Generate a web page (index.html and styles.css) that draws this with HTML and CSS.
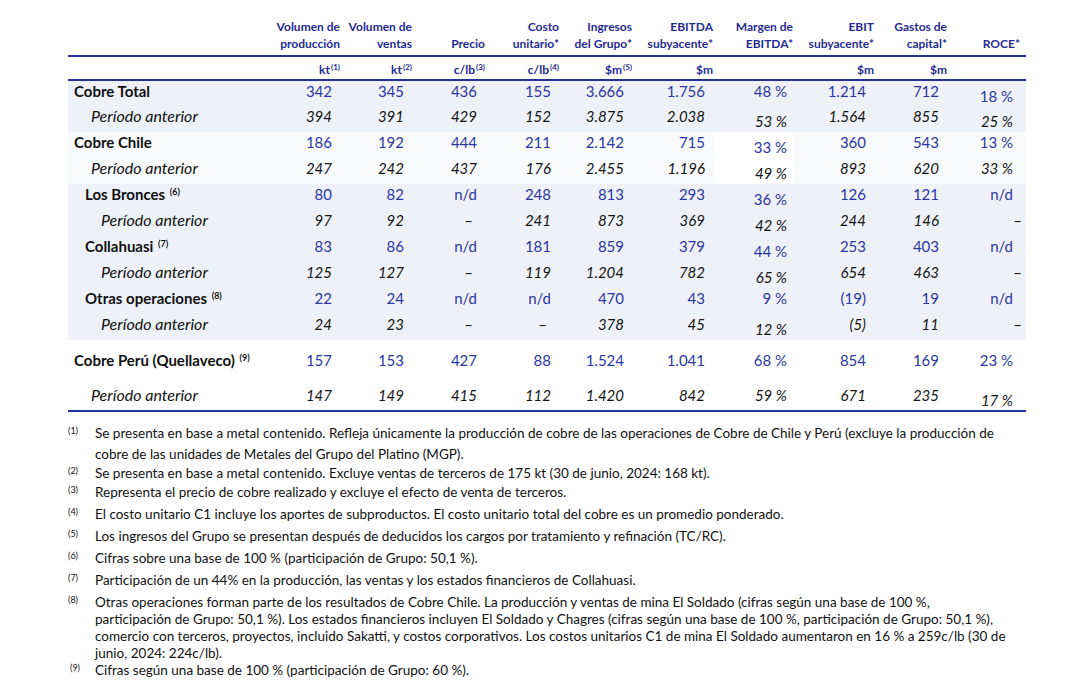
FILE: index.html
```html
<!DOCTYPE html>
<html lang="es">
<head>
<meta charset="utf-8">
<title>Cobre</title>
<link rel="stylesheet" href="styles.css">
</head>
<body>
<div class="page">
<table class="tbl">
  <colgroup>
    <col class="c-label"><col class="c2"><col class="c3"><col class="c4"><col class="c5"><col class="c6"><col class="c7"><col class="c8"><col class="c9"><col class="c10"><col class="c11">
  </colgroup>
  <thead>
    <tr class="hdr">
      <th></th>
      <th>Volumen de<br>producción</th>
      <th>Volumen de<br>ventas</th>
      <th>Precio</th>
      <th>Costo<br>unitario*</th>
      <th>Ingresos<br>del Grupo*</th>
      <th>EBITDA<br>subyacente*</th>
      <th>Margen de<br>EBITDA*</th>
      <th>EBIT<br>subyacente*</th>
      <th>Gastos de<br>capital*</th>
      <th class="last">ROCE*</th>
    </tr>
    <tr class="units">
      <th></th>
      <th>kt<sup>(1)</sup></th>
      <th>kt<sup>(2)</sup></th>
      <th>c/lb<sup>(3)</sup></th>
      <th>c/lb<sup>(4)</sup></th>
      <th>$m<sup>(5)</sup></th>
      <th>$m</th>
      <th></th>
      <th>$m</th>
      <th>$m</th>
      <th class="last"></th>
    </tr>
  </thead>
  <tbody>
    <tr class="row total cur">
      <td class="lbl l0">Cobre Total</td>
      <td>342</td><td>345</td><td>436</td><td>155</td><td>3.666</td><td>1.756</td><td class="mg">48 %</td><td>1.214</td><td>712</td><td class="roce"><span class="dn">18 %</span></td>
    </tr>
    <tr class="row total prev">
      <td class="lbl l1">Período anterior</td>
      <td>394</td><td>391</td><td>429</td><td>152</td><td>3.875</td><td>2.038</td><td class="mg"><span class="dn">53 %</span></td><td>1.564</td><td>855</td><td class="roce"><span class="dn">25 %</span></td>
    </tr>
    <tr class="row chile cur">
      <td class="lbl l0">Cobre Chile</td>
      <td>186</td><td>192</td><td>444</td><td>211</td><td>2.142</td><td>715</td><td class="mg white"><span class="dn">33 %</span></td><td>360</td><td>543</td><td class="roce">13 %</td>
    </tr>
    <tr class="row chile prev">
      <td class="lbl l1">Período anterior</td>
      <td>247</td><td>242</td><td>437</td><td>176</td><td>2.455</td><td>1.196</td><td class="mg white"><span class="dn">49 %</span></td><td>893</td><td>620</td><td class="roce">33 %</td>
    </tr>
    <tr class="row sub cur">
      <td class="lbl l2">Los Bronces <sup>(6)</sup></td>
      <td>80</td><td>82</td><td>n/d</td><td>248</td><td>813</td><td>293</td><td class="mg"><span class="dn">36 %</span></td><td>126</td><td>121</td><td class="roce">n/d</td>
    </tr>
    <tr class="row sub prev">
      <td class="lbl l3">Período anterior</td>
      <td>97</td><td>92</td><td class="dash">–</td><td>241</td><td>873</td><td>369</td><td class="mg"><span class="dn">42 %</span></td><td>244</td><td>146</td><td class="roce dash">–</td>
    </tr>
    <tr class="row sub cur">
      <td class="lbl l2">Collahuasi <sup>(7)</sup></td>
      <td>83</td><td>86</td><td>n/d</td><td>181</td><td>859</td><td>379</td><td class="mg"><span class="dn">44 %</span></td><td>253</td><td>403</td><td class="roce">n/d</td>
    </tr>
    <tr class="row sub prev">
      <td class="lbl l3">Período anterior</td>
      <td>125</td><td>127</td><td class="dash">–</td><td>119</td><td>1.204</td><td>782</td><td class="mg"><span class="dn">65 %</span></td><td>654</td><td>463</td><td class="roce dash">–</td>
    </tr>
    <tr class="row sub cur">
      <td class="lbl l2">Otras operaciones <sup>(8)</sup></td>
      <td>22</td><td>24</td><td>n/d</td><td>n/d</td><td>470</td><td>43</td><td class="mg">9 %</td><td>(19)</td><td>19</td><td class="roce">n/d</td>
    </tr>
    <tr class="row sub prev">
      <td class="lbl l3">Período anterior</td>
      <td>24</td><td>23</td><td class="dash">–</td><td class="dash">–</td><td>378</td><td>45</td><td class="mg"><span class="dn">12 %</span></td><td>(5)</td><td>11</td><td class="roce dash">–</td>
    </tr>
    <tr class="row peru cur">
      <td class="lbl l0">Cobre Perú (Quellaveco) <sup>(9)</sup></td>
      <td>157</td><td>153</td><td>427</td><td>88</td><td>1.524</td><td>1.041</td><td class="mg">68 %</td><td>854</td><td>169</td><td class="roce">23 %</td>
    </tr>
    <tr class="row peru prev lastrow">
      <td class="lbl l1">Período anterior</td>
      <td>147</td><td>149</td><td>415</td><td>112</td><td>1.420</td><td>842</td><td class="mg">59 %</td><td>671</td><td>235</td><td class="roce"><span class="dn">17 %</span></td>
    </tr>
  </tbody>
</table>

<div class="notes">
  <div class="fn fn1"><span class="mk">(1)</span><span class="tx">Se presenta en base a metal contenido. Refleja únicamente la producción de cobre de las operaciones de Cobre de Chile y Perú (excluye la producción de<br>cobre de las unidades de Metales del Grupo del Platino (MGP).</span></div>
  <div class="fn fn2"><span class="mk">(2)</span><span class="tx">Se presenta en base a metal contenido. Excluye ventas de terceros de 175 kt (30 de junio, 2024: 168 kt).</span></div>
  <div class="fn"><span class="mk">(3)</span><span class="tx">Representa el precio de cobre realizado y excluye el efecto de venta de terceros.</span></div>
  <div class="fn"><span class="mk">(4)</span><span class="tx">El costo unitario C1 incluye los aportes de subproductos. El costo unitario total del cobre es un promedio ponderado.</span></div>
  <div class="fn"><span class="mk">(5)</span><span class="tx">Los ingresos del Grupo se presentan después de deducidos los cargos por tratamiento y refinación (TC/RC).</span></div>
  <div class="fn"><span class="mk">(6)</span><span class="tx">Cifras sobre una base de 100 % (participación de Grupo: 50,1 %).</span></div>
  <div class="fn"><span class="mk">(7)</span><span class="tx">Participación de un 44% en la producción, las ventas y los estados financieros de Collahuasi.</span></div>
  <div class="fn fn8"><span class="mk">(8)</span><span class="tx">Otras operaciones forman parte de los resultados de Cobre Chile. La producción y ventas de mina El Soldado (cifras según una base de 100 %,<br>participación de Grupo: 50,1 %). Los estados financieros incluyen El Soldado y Chagres (cifras según una base de 100 %, participación de Grupo: 50,1 %),<br>comercio con terceros, proyectos, incluido Sakatti, y costos corporativos. Los costos unitarios C1 de mina El Soldado aumentaron en 16 % a 259c/lb (30 de<br>junio, 2024: 224c/lb).</span></div>
  <div class="fn fn9"><span class="mk">(9)</span><span class="tx">Cifras según una base de 100 % (participación de Grupo: 60 %).</span></div>
</div>
</div>
</body>
</html>
```

FILE: styles.css
```css
html, body {
  margin: 0;
  padding: 0;
  background: #ffffff;
}

.page {
  padding: 14px 0 0 68px;
  font-family: Lato, "Open Sans", sans-serif;
  color: #111111;
}

.tbl {
  width: 958px;
  table-layout: fixed;
  border-collapse: collapse;
}

.c-label { width: 204px; }
.c2 { width: 68px; }
.c3 { width: 72px; }
.c4 { width: 73px; }
.c5 { width: 74px; }
.c6 { width: 73px; }
.c7 { width: 81px; }
.c8 { width: 80px; }
.c9 { width: 81px; }
.c10 { width: 73px; }
.c11 { width: 79px; }

.tbl th {
  font-weight: 700;
  font-size: 12px;
  color: #1f2b93;
  text-align: right;
  padding: 0;
  white-space: nowrap;
}

.hdr th {
  height: 38px;
  line-height: 17px;
  vertical-align: bottom;
  padding-bottom: 3px;
  border-bottom: 2px solid #25309a;
}

.units th {
  height: 20px;
  line-height: 14px;
  vertical-align: bottom;
  padding-bottom: 2px;
  border-bottom: 2px solid #25309a;
}

.tbl th.last {
  padding-right: 6px;
}

.tbl sup {
  font-size: 8px;
  line-height: 0;
  vertical-align: 4px;
  margin-left: 1px;
}

.row td {
  height: 26px;
  padding: 2px 8px 0 0;
  font-size: 15px;
  line-height: 16px;
  text-align: right;
  vertical-align: top;
  box-sizing: border-box;
  white-space: nowrap;
}

.row.cur td {
  color: #2b37a3;
}

.row.prev td {
  color: #141414;
  font-style: italic;
}

.row td.lbl {
  text-align: left;
  color: #111111;
  padding-right: 0;
}

.row.cur td.lbl {
  font-weight: 700;
  font-size: 15px;
}

.row.prev td.lbl {
  font-size: 16px;
}

.row td.lbl sup {
  font-size: 9px;
  font-weight: 700;
  vertical-align: 5px;
}

.l0 { padding-left: 6px !important; }
.l1 { padding-left: 23px !important; }
.l2 { padding-left: 17px !important; }
.l3 { padding-left: 33px !important; }

.row td.mg {
  padding-right: 6px;
}

.row td.roce {
  padding-right: 13px;
}

.row td.dash {
  padding-right: 12px;
  font-style: normal;
}

.row td.roce.dash {
  padding-right: 4px;
}

.dn {
  display: inline-block;
  transform: translateY(5px);
}

.total td { background: #eef1f7; }
.chile td { background: #f9fafc; }
.chile td.white { background: #ffffff; }
.sub td { background: #eef1f7; }
.peru td { background: #ffffff; }

.peru.cur td { height: 42px; padding-top: 12px; }
.peru.prev td { height: 29px; padding-top: 5px; }
.lastrow td { border-bottom: 2px solid #25309a; }

.notes {
  margin-top: 11px;
  width: 1000px;
  font-size: 13.5px;
  color: #111111;
}

.fn {
  display: grid;
  grid-template-columns: 27px 1fr;
  line-height: 17px;
  margin-bottom: 5px;
}

.fn1 { line-height: 21px; margin-bottom: 0; }
.fn2 { margin-bottom: 2px; }
.fn8 { margin-bottom: 0; }

.mk {
  font-size: 9px;
  line-height: 12px;
  align-self: start;
}

.fn1 .mk { margin-top: 2px; }
.fn9 .mk { padding-left: 2px; }

.tx {
  white-space: nowrap;
}
```
